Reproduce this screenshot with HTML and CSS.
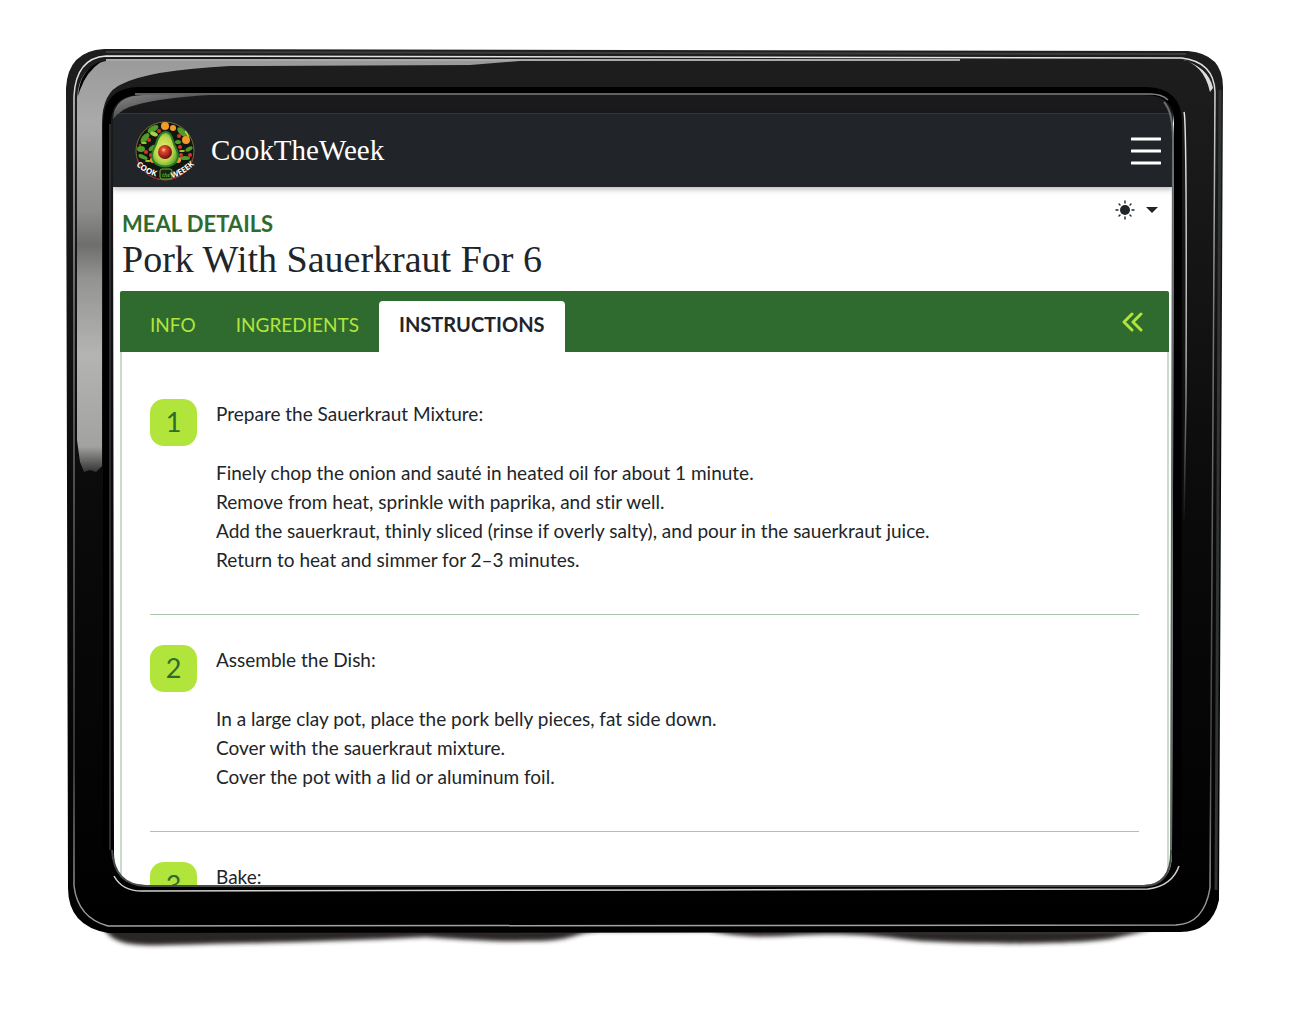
FILE: index.html
```html
<!DOCTYPE html>
<html lang="en">
<head>
<meta charset="utf-8">
<meta name="viewport" content="width=device-width, initial-scale=1">
<title>CookTheWeek</title>
<link rel="stylesheet" href="styles.css">
</head>
<body>
<div class="stage">
  <div class="screen">
    <div class="statusbar"></div>
    <header class="navbar">
      <a class="brand" href="#">
        <svg class="logo" viewBox="0 0 60 60" aria-hidden="true">
          <defs>
            <radialGradient id="skin" cx=".45" cy=".5" r=".6"><stop offset="0" stop-color="#e8ec72"/><stop offset=".6" stop-color="#b9d64a"/><stop offset="1" stop-color="#3f9a2c"/></radialGradient>
            <radialGradient id="pit" cx=".4" cy=".35" r=".65"><stop offset="0" stop-color="#ffd9b0"/><stop offset=".25" stop-color="#e5472a"/><stop offset="1" stop-color="#6d0d14"/></radialGradient>
            <path id="arcLeft" d="M1 44Q9 53 26 57"/>
            <path id="arcRight" d="M37 57Q50 54 62 41"/>
          </defs>
          <circle cx="30" cy="30" r="29" fill="#11170f" stroke="#7b6a35"/>
          <path d="M2 36Q8 58 30 59Q52 58 58 36" fill="none" stroke="#9c1c28" stroke-width="1"/>
          <g fill="#4f9c2b">
            <ellipse cx="18" cy="8" rx="6" ry="3" transform="rotate(-30 18 8)"/>
            <ellipse cx="10" cy="17" rx="6" ry="3" transform="rotate(-50 10 17)"/>
            <ellipse cx="6" cy="28" rx="4" ry="3"/>
            <ellipse cx="8" cy="36" rx="5" ry="2" transform="rotate(25 8 36)"/>
            <ellipse cx="47" cy="11" rx="6" ry="3" transform="rotate(45 47 11)"/>
            <ellipse cx="54" cy="28" rx="4" ry="2" transform="rotate(-30 54 28)"/>
            <ellipse cx="50" cy="37" rx="5" ry="2"/>
            <ellipse cx="43" cy="21" rx="3" ry="2"/>
            <ellipse cx="17" cy="27" rx="4" ry="2" transform="rotate(-40 17 27)"/>
          </g>
          <g fill="#a7d63c">
            <ellipse cx="19" cy="13" rx="4" ry="2" transform="rotate(20 19 13)"/>
            <ellipse cx="9" cy="22" rx="3" ry="1"/>
            <ellipse cx="52" cy="13" rx="1" ry="4" transform="rotate(-30 52 13)"/>
            <ellipse cx="13" cy="40" rx="3" ry="1"/>
            <ellipse cx="47" cy="30" rx="3" ry="1"/>
          </g>
          <g fill="#d6342a">
            <circle cx="14" cy="19" r="2"/><circle cx="11" cy="31" r="2"/><circle cx="16" cy="34" r="2"/><circle cx="24" cy="10" r="2"/>
            <circle cx="44" cy="15" r="2"/><circle cx="45" cy="26" r="2"/><circle cx="55" cy="34" r="2"/><circle cx="5" cy="24" r="1"/><circle cx="46" cy="34" r="2"/>
          </g>
          <g fill="#f29a2e"><circle cx="30" cy="5" r="4"/><circle cx="38" cy="7" r="3"/><circle cx="51" cy="19" r="4"/><circle cx="18" cy="39" r="3"/><circle cx="43" cy="39" r="3"/></g>
          <path d="M30 11C35 10 37 16 39 23C42 29 45 35 41 41C35 47 25 47 19 41C15 35 18 29 21 23C23 16 25 12 30 11Z" fill="url(#skin)" stroke="#2c7a29" stroke-width="2"/>
          <circle cx="30" cy="31" r="7" fill="url(#pit)"/>
          <rect x="25" y="48" width="12" height="10" rx="2" fill="#172711" stroke="#77ad35"/>
          <text class="logo-word"><textPath href="#arcLeft">COOK</textPath></text>
          <text class="logo-word"><textPath href="#arcRight">WEEEK</textPath></text>
          <text class="logo-the" x="27" y="56">the</text>
        </svg>
        <span>CookTheWeek</span>
      </a>
      <button class="menu" type="button" aria-label="Open menu">
        <svg viewBox="0 0 30 28" width="30" height="28"><path d="M1 2H29M1 14H29M1 26H29" fill="none" stroke="#fff" stroke-width="3" stroke-linecap="round"/></svg>
      </button>
    </header>
    <main class="page">
      <div class="heading">
        <div>
          <p class="eyebrow">MEAL DETAILS</p>
          <h1>Pork With Sauerkraut For 6</h1>
        </div>
        <button class="theme" type="button" aria-label="Colour theme">
          <svg viewBox="0 0 20 20" width="20" height="20"><circle cx="10" cy="10" r="5" fill="#212529"/><path d="M10 1V3M10 17V19M1 10H3M17 10H19M4 4L5 5M15 15L16 16M4 16L5 15M15 5L16 4" stroke="#212529" stroke-width="1.4" stroke-linecap="round"/></svg>
          <svg viewBox="0 0 12 6" width="12" height="6"><path d="M0 0H12L6 6Z" fill="#212529"/></svg>
        </button>
      </div>
      <section class="card">
        <nav class="tabs">
          <a class="tab" href="#">INFO</a>
          <a class="tab" href="#">INGREDIENTS</a>
          <a class="tab active" href="#" aria-current="page">INSTRUCTIONS</a>
          <button class="back" type="button" aria-label="Back">
            <svg viewBox="0 0 22 20" width="22" height="20"><path d="M10 2L2 10L10 18M19 2L11 10L19 18" fill="none" stroke="#b2e53b" stroke-width="3" stroke-linecap="round" stroke-linejoin="round"/></svg>
          </button>
        </nav>
        <ol class="steps">
          <li class="step">
            <span class="number">1</span>
            <div>
              <p>Prepare the Sauerkraut Mixture:</p>
              <p class="detail">Finely chop the onion and sauté in heated oil for about 1 minute.<br>Remove from heat, sprinkle with paprika, and stir well.<br>Add the sauerkraut, thinly sliced (rinse if overly salty), and pour in the sauerkraut juice.<br>Return to heat and simmer for 2–3 minutes.</p>
            </div>
          </li>
          <li class="step">
            <span class="number">2</span>
            <div>
              <p>Assemble the Dish:</p>
              <p class="detail">In a large clay pot, place the pork belly pieces, fat side down.<br>Cover with the sauerkraut mixture.<br>Cover the pot with a lid or aluminum foil.</p>
            </div>
          </li>
          <li class="step">
            <span class="number">3</span>
            <div>
              <p>Bake:</p>
            </div>
          </li>
        </ol>
      </section>
    </main>
  </div>
  <svg class="frame" viewBox="0 0 1297 1010" preserveAspectRatio="none" aria-hidden="true">
    <defs>
      <linearGradient id="sideShine" gradientUnits="userSpaceOnUse" x1="0" y1="60" x2="0" y2="480"><stop offset="0" stop-color="#9a9a9a"/><stop offset=".15" stop-color="#aaa"/><stop offset=".36" stop-color="#8c8c8a"/><stop offset=".44" stop-color="#6e6e6c"/><stop offset=".52" stop-color="#939391"/><stop offset=".7" stop-color="#b4b4b2"/><stop offset=".92" stop-color="#a2a2a0"/><stop offset="1" stop-color="#111"/></linearGradient>
      <linearGradient id="body" x1="0" y1="0" x2="0" y2="1"><stop offset="0" stop-color="#1e1e1e"/><stop offset=".5" stop-color="#0b0b0b"/><stop offset="1" stop-color="#000"/></linearGradient>
      <linearGradient id="rim" x1="0" y1="0" x2="0" y2="1"><stop offset="0" stop-color="#e4e4e2"/><stop offset=".3" stop-color="#777"/><stop offset=".8" stop-color="#444"/><stop offset="1" stop-color="#a5a2a0"/></linearGradient>
      <linearGradient id="cornerShine" x1="0" y1="0" x2="1" y2="1"><stop offset="0" stop-color="#8a8a8a"/><stop offset="1" stop-color="#1a1a1c"/></linearGradient>
      <linearGradient id="fade" gradientUnits="userSpaceOnUse" x1="0" y1="110" x2="0" y2="520"><stop offset="0" stop-color="#e8e8e8"/><stop offset=".6" stop-color="#aaa"/><stop offset="1" stop-color="#111"/></linearGradient>
      <filter id="soft" x="-5%" y="-50%" width="110%" height="200%"><feGaussianBlur stdDeviation="2"/></filter>
    </defs>
    <path d="M104 928C112 944 132 946 165 945C260 943 350 941 426 937C470 940 500 942 525 941C575 942 570 933 600 931L710 931C740 938 775 937 800 935C860 932 890 938 920 941C990 945 1090 944 1115 938L1150 930Z" fill="#2c2726" filter="url(#soft)"/>
    <path fill="url(#body)" fill-rule="evenodd" d="M104 49L1188 51Q1223 54 1223 87L1219 900Q1212 932 1180 932L108 933Q68 926 68 888L66 88Q68 51 104 49ZM140 94Q113 96 113 124L114 854Q114 885 144 885H1144Q1172 885 1172 854L1174 124Q1174 94 1144 94Z"/>
    <path d="M106 61H520L470 65L230 66Q150 70 122 84Q102 92 102 124V466L96 472L90 470L84 472L80 462L77 440V98Q79 66 106 61Z" fill="url(#sideShine)"/>
    <path d="M78 96Q80 68 102 61Q86 72 80 90Z" fill="#000"/>
    <path d="M107 850V122Q108 90 142 91H1146Q1178 92 1178 122L1177 850" fill="none" stroke="#000" stroke-width="8"/>
    <path d="M113 119Q114 95 144 95H210Q160 98 136 105Q122 108 113 119Z" fill="url(#cornerShine)"/>
    <path d="M74 886V96Q76 58 106 56L1182 58Q1214 62 1215 92L1210 888Q1204 924 1176 925L108 926Q78 918 74 886Z" fill="none" stroke="url(#rim)" stroke-width="1.5"/>
    <path d="M106 52L1186 54" stroke="#3b3d3d" stroke-width="2"/>
    <path d="M106 60L960 60" stroke="#d8d8d6" stroke-width="1.5"/>
    <path d="M1180 59Q1204 64 1210 92L1213 88Q1208 66 1180 59Z" fill="#ddd"/>
    <path d="M1220 90L1216 890" fill="none" stroke="#303435" stroke-width="3"/>
    <path d="M110 850V124" stroke="#3a3a3e" stroke-width="1.5"/>
    <path d="M135 94H1150Q1162 94 1168 100" fill="none" stroke="#85817f" stroke-width="1.5"/>
    <path d="M1184 112Q1187 120 1186 400L1184 520" fill="none" stroke="url(#fade)" stroke-width="1.5"/>
    <path d="M1164 102Q1173 112 1173 140L1171 852" fill="none" stroke="#686b6d" stroke-width="2"/>
    <path d="M114 876Q122 891 142 891L700 890L1148 889Q1172 886 1179 866" fill="none" stroke="#d2d0ce" stroke-width="1.5"/>
    <path d="M112 850Q114 885 146 886H1144Q1172 885 1171 850" fill="none" stroke="#454c49" stroke-width="2"/>
  </svg>
</div>
</body>
</html>
```
FILE: styles.css
```css
* { box-sizing: border-box; }
body {
  margin: 0;
  background: #fff;
  color: #212529;
  font: 19px/29px Lato, "Open Sans", sans-serif;
  font-variant-ligatures: none;
}
p, h1 { margin: 0; }
button { padding: 0; border: 0; background: none; cursor: pointer; }
svg { display: block; }
.stage {
  position: relative;
  display: grid;
  height: 100vh;
  padding: 94px 124px 125px 113px;
}
.frame {
  position: absolute;
  inset: 0;
  width: 100%;
  height: 100%;
  pointer-events: none;
}
.screen {
  min-height: 0;
  overflow: hidden;
  border-radius: 16px;
  background: #fff;
}
.statusbar { height: 19px; background: #1a1a1c; }
.navbar {
  display: flex;
  align-items: center;
  justify-content: space-between;
  height: 74px;
  padding: 0 12px 0 22px;
  border-top: 1px solid #34373c;
  background: #212529;
  box-shadow: 0 2px 6px rgba(0, 0, 0, .3);
}
.brand {
  display: flex;
  align-items: center;
  gap: 16px;
  color: #fff;
  font: 29px/36px "Liberation Serif", serif;
  text-decoration: none;
}
.brand span { padding-bottom: 2px; }
.logo { width: 60px; height: 60px; }
.logo-word { fill: #fff; font: bold 8px "Open Sans", sans-serif; }
.logo-the { fill: #8fcb3e; font: italic 7px "Liberation Serif", serif; }
.page { padding: 13px 4px 0 7px; }
.heading {
  display: flex;
  align-items: flex-start;
  justify-content: space-between;
  padding: 0 11px 0 2px;
}
.heading > div { padding-top: 9px; }
.eyebrow { color: #2f6b2f; font-size: 22px; font-weight: 700; line-height: 30px; }
h1 { font: 38px/40px "Liberation Serif", serif; }
.theme { display: flex; align-items: center; gap: 11px; }
.card {
  margin-top: 12px;
  border: 1px solid #c9dccb;
  border-width: 0 2px;
  border-radius: 3px 3px 0 0;
}
.tabs {
  display: flex;
  align-items: flex-end;
  height: 61px;
  margin: 0 -2px;
  padding: 0 25px 0 10px;
  border-radius: 2px 2px 0 0;
  background: #2f6b2f;
}
.tab {
  padding: 9px 20px 13px;
  border-radius: 4px 4px 0 0;
  color: #b2e53b;
  font-size: 19px;
  line-height: 29px;
  text-decoration: none;
}
.tab.active { background: #fff; color: #212529; font-size: 20px; font-weight: 700; }
.back { align-self: center; margin-left: auto; }
.steps { margin: 0; padding: 17px 28px 0; list-style: none; }
.step {
  display: flex;
  align-items: flex-start;
  gap: 19px;
  padding: 30px 0 40px;
}
.step + .step { border-top: 1px solid #a9c8ab; }
.number {
  flex: none;
  width: 47px;
  height: 47px;
  border-radius: 14px;
  background: #b2e53b;
  color: #2f6b2f;
  font-size: 27px;
  line-height: 45px;
  text-align: center;
}
.detail { margin-top: 30px; }
```
